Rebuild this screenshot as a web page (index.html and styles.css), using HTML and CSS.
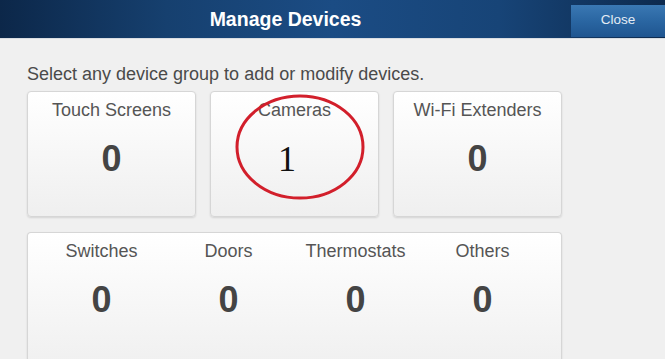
FILE: index.html
```html
<!DOCTYPE html>
<html>
<head>
<meta charset="utf-8">
<link rel="stylesheet" href="styles.css">
</head>
<body>
<header class="topbar">
  <div class="title">Manage Devices</div>
  <div class="close">Close</div>
</header>
<main class="content">
  <p class="intro">Select any device group to add or modify devices.</p>
  <div class="grid">
    <div class="card">
      <div class="label">Touch Screens</div>
      <div class="num">0</div>
    </div>
    <div class="card card-marked">
      <div class="label">Cameras</div>
      <div class="num num-serif">1</div>
      <svg class="ring" width="134" height="112" viewBox="0 0 134 112"><ellipse cx="67" cy="56" rx="63" ry="51" fill="none" stroke="#d21f2b" stroke-width="3"/></svg>
    </div>
    <div class="card">
      <div class="label">Wi-Fi Extenders</div>
      <div class="num">0</div>
    </div>
    <div class="card card-wide">
      <div class="col"><div class="label">Switches</div><div class="num">0</div></div>
      <div class="col"><div class="label">Doors</div><div class="num">0</div></div>
      <div class="col"><div class="label">Thermostats</div><div class="num">0</div></div>
      <div class="col"><div class="label">Others</div><div class="num">0</div></div>
    </div>
  </div>
</main>
</body>
</html>
```

FILE: styles.css
```css
html, body {
  margin: 0;
  padding: 0;
  height: 100%;
  overflow: hidden;
}
body {
  background: #f0f0f0;
  font-family: "Liberation Sans", Arial, sans-serif;
  width: 665px;
}
.topbar {
  height: 38px;
  display: flex;
  background: linear-gradient(90deg, #0c2749 0%, #16406f 25%, #1b4c84 50%, #174477 75%, #0d2a4e 100%);
  border-bottom: 1px solid #d9dde2;
}
.title {
  flex: 1;
  text-align: center;
  color: #fff;
  font-weight: bold;
  font-size: 19.5px;
  line-height: 38px;
}
.close {
  width: 94px;
  margin-top: 5px;
  height: 32px;
  background: linear-gradient(180deg, #3a78b3 0%, #2a66a2 50%, #1f5590 100%);
  color: #e4ecf5;
  font-size: 13.5px;
  line-height: 30px;
  text-align: center;
}
.content {
  padding: 0 0 0 27px;
}
.intro {
  margin: 0;
  padding-top: 24px;
  height: 28px;
  font-size: 18px;
  line-height: 22px;
  color: #4a4a4a;
}
.grid {
  display: grid;
  grid-template-columns: repeat(3, 169px);
  column-gap: 14px;
  row-gap: 15px;
}
.card {
  position: relative;
  border: 1px solid #d6d6d6;
  border-radius: 4px;
  background: linear-gradient(180deg, #ffffff 0%, #f7f7f7 50%, #efefef 100%);
  box-shadow: 0 1px 2px rgba(0,0,0,0.12);
  text-align: center;
  box-sizing: border-box;
  height: 126px;
}
.label {
  font-size: 18px;
  color: #555;
  padding-top: 8px;
  line-height: 20px;
}
.num {
  font-size: 36px;
  font-weight: bold;
  color: #444;
  line-height: 40px;
  margin-top: 19px;
}
.num-serif {
  font-family: "Liberation Serif", "Times New Roman", serif;
  font-weight: normal;
  color: #111;
  font-size: 36px;
  margin-right: 15px;
}
.ring {
  position: absolute;
  left: 22px;
  top: -1px;
}
.card-wide {
  grid-column: 1 / 4;
  height: 140px;
  display: grid;
  grid-template-columns: repeat(4, 127px);
  padding-left: 10px;
  border-bottom: none;
}
```
